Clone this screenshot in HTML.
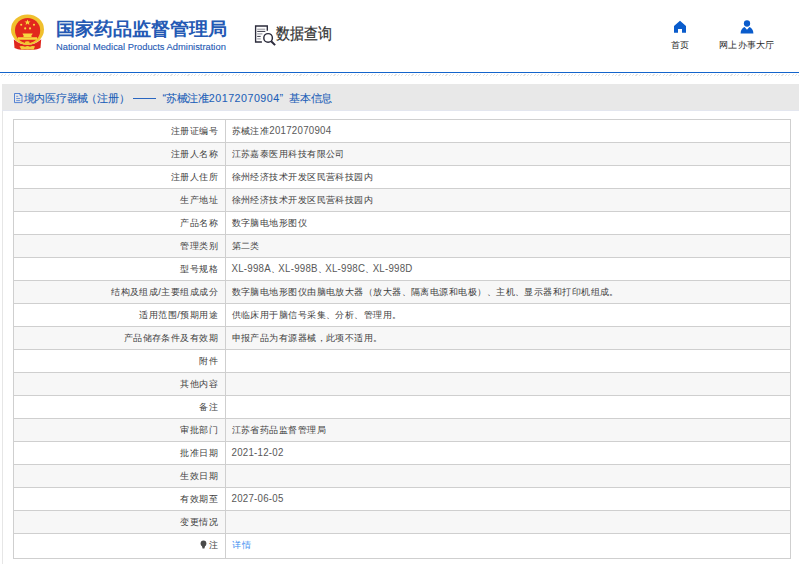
<!DOCTYPE html>
<html><head><meta charset="utf-8">
<style>
*{margin:0;padding:0;box-sizing:border-box}
html,body{width:799px;height:564px;overflow:hidden;background:#fff;font-family:"Liberation Sans",sans-serif;color:#333}
.abs{position:absolute}
#hdr{position:absolute;left:0;top:0;width:799px;height:72px;background:#fff}
#blue{position:absolute;left:0;top:71.7px;width:799px;height:1.4px;background:#1364cc}
#hatch{position:absolute;left:0;top:73.8px;width:799px;height:2.4px;background:repeating-linear-gradient(135deg,#fff 0,#fff 1.6px,#e2e2e2 1.6px,#e2e2e2 2.4px)}
.title{position:absolute;left:56px;top:15.5px;font-size:19px;font-weight:bold;color:#2459b4;white-space:nowrap;line-height:26px;transform:scaleY(0.94);transform-origin:0 100%}
.sub{position:absolute;left:56px;top:40.8px;font-size:9.36px;color:#2459b4;white-space:nowrap;line-height:12px;-webkit-text-stroke:0.1px #2459b4}
.sjcx{position:absolute;left:276px;top:21.6px;font-size:14px;color:#333;white-space:nowrap;line-height:20px;transform:scaleY(1.14);transform-origin:0 0;-webkit-text-stroke:0.2px #333}
.nav{position:absolute;font-size:9.2px;letter-spacing:0.25px;color:#2a2a2a;white-space:nowrap;line-height:12px}
#panel{position:absolute;left:2px;top:84px;width:810px;height:500px;border-left:1px solid #e6e6e6;background:#fff}
#ph{position:absolute;left:2px;top:84px;width:800px;height:26.5px;background:#e8e8e8;border-bottom:1px solid #e3e6ef}
.ph{position:absolute;top:91.5px;font-size:10.7px;letter-spacing:-0.25px;color:#1d5fb8;white-space:nowrap;line-height:13px;-webkit-text-stroke:0.08px #1d5fb8}
table{position:absolute;left:12.5px;top:118.5px;width:778px;border-collapse:collapse;font-size:9.4px;letter-spacing:0.45px;color:#404040}
td{border:1px solid #cfcfcf;height:23px;padding:0;line-height:12px;white-space:nowrap}
td.l{width:212px;text-align:right;padding-right:6.4px;color:#404040}
td.v{padding-left:6px}
tr:nth-child(even) td{background:#f7f7f7}
a{color:#3b8ef0;text-decoration:none}
.n{font-size:9.7px;letter-spacing:0.25px;color:#585858;display:inline-block;transform:scaleY(1.08);transform-origin:0 70%}
.d{letter-spacing:-1.6px}
</style></head><body>
<div id="hdr">
  <svg class="abs" style="left:0;top:0" width="60" height="60" viewBox="0 0 60 60">
    <ellipse cx="27.5" cy="29.5" rx="16.5" ry="15.1" fill="#f0c02e"/>
    <ellipse cx="27.6" cy="30.5" rx="12.6" ry="12.6" fill="#e2281d"/>
    <path d="M13.8 39.2 Q20 44.8 27.5 44.8 Q35 44.8 41.2 39.2 L40.5 48 Q37 49.8 34 49.8 L21 49.8 Q18 49.8 14.5 48Z" fill="#df261c"/>
    <path d="M15.2 38.6 Q21 44.2 27.5 44.2 Q34 44.2 39.8 38.6" fill="none" stroke="#f3c631" stroke-width="1.4"/>
    <polygon points="27.5,19.4 28.3,21.5 30.5,21.5 28.8,22.8 29.4,24.9 27.5,23.6 25.6,24.9 26.2,22.8 24.5,21.5 26.7,21.5" fill="#f9dc3e"/>
    <circle cx="21.2" cy="24.8" r="1.05" fill="#f9dc3e"/><circle cx="34" cy="24.8" r="1.05" fill="#f9dc3e"/>
    <circle cx="25.2" cy="28.4" r="1.05" fill="#f9dc3e"/><circle cx="30" cy="28.4" r="1.05" fill="#f9dc3e"/>
    <path d="M22.5 33.5 H32.7 L32 35 H23.2Z M23.5 35 H31.5 V37 H23.5Z M18 37.2 H37 V39.7 H18Z" fill="#f7d840"/>
    <ellipse cx="27.3" cy="42.4" rx="2.4" ry="1.2" fill="#f3c631"/>
    <path d="M19.5 46.3 Q23 45.3 25 46.8 Q27.5 45.3 30 46.8 Q32 45.3 35 46.3 L33.6 49.8 Q30.5 48.6 27.5 49.6 Q24.5 48.6 21.4 49.8Z" fill="#f3cc3c"/>
  </svg>
  <div class="title">国家药品监督管理局</div>
  <div class="sub">National Medical Products Administration</div>
  <svg class="abs" style="left:250px;top:20px" width="30" height="28" viewBox="0 0 30 28">
    <path d="M11.9 21.95 H5.6 V5.95 H17.3 V10.7" fill="none" stroke="#2b2b3b" stroke-width="1.35"/>
    <path d="M7.2 9.2h8M7.2 13.9h5.2M7.2 18.9h3.5" stroke="#8a8a94" stroke-width="0.95"/>
    <path d="M7.2 11.4h8.1M7.2 16.4h3.5" stroke="#2b2b3b" stroke-width="0.95"/>
    <circle cx="18.1" cy="17.9" r="4.3" fill="none" stroke="#2b2b3b" stroke-width="1.45"/>
    <path d="M21.2 21.2 L25.1 25.1" stroke="#2b2b3b" stroke-width="2"/>
  </svg>
  <div class="sjcx">数据查询</div>
  <svg class="abs" style="left:673px;top:20px" width="14" height="13" viewBox="0 0 14 13">
    <path d="M1 6 L7 0.8 L13 6 V12.7 H9 V9 H5 V12.7 H1Z" fill="#0a5ccc"/>
  </svg>
  <div class="nav" style="left:670.5px;top:38.5px">首页</div>
  <svg class="abs" style="left:740px;top:20px" width="14" height="14" viewBox="0 0 14 14">
    <circle cx="7" cy="3.5" r="3.15" fill="#0a5ccc"/>
    <path d="M0.6 13.4 C0.6 10 2.5 7.6 4.6 7.0 L7 9.8 L9.4 7.0 C11.5 7.6 13.4 10 13.4 13.4Z" fill="#0a5ccc"/>
  </svg>
  <div class="nav" style="left:719px;top:38.5px">网上办事大厅</div>
</div>
<div id="blue"></div>
<div id="hatch"></div>
<div id="panel"></div>
<div id="ph"></div>
<svg class="abs" style="left:13.5px;top:92.5px" width="9" height="11" viewBox="0 0 9 11">
  <path d="M0.5 0.5 H6 L8 2.5 V9.6 H0.5Z" fill="none" stroke="#3a70d0" stroke-width="0.85"/>
  <path d="M6 0.5 V2.5 H8" fill="none" stroke="#3a70d0" stroke-width="0.85"/>
  <path d="M2.2 3.3h2M2.2 5.5h4M2.2 7.6h4" stroke="#4a7cd4" stroke-width="0.8"/>
</svg>
<div class="ph" style="left:23.6px">境内医疗器械</div>
<div class="ph" style="left:86.3px">（注<span style="letter-spacing:0.3px">册</span>）</div>
<div class="abs" style="left:133.2px;top:97.6px;width:23px;height:1.1px;background:#2a66c0"></div>
<div class="ph" style="left:162.5px">“</div>
<div class="ph" style="left:165.8px">苏械注准<span style="letter-spacing:0.5px">20172070904</span></div>
<div class="ph" style="left:279.5px">”</div>
<div class="ph" style="left:289px">基本信息</div>
<table>
    <tr><td class="l">注册证编号</td><td class="v">苏械注准<span class="n">20172070904</span></td></tr>
    <tr><td class="l">注册人名称</td><td class="v">江苏嘉泰医用科技有限公司</td></tr>
    <tr><td class="l">注册人住所</td><td class="v">徐州经济技术开发区民营科技园内</td></tr>
    <tr><td class="l">生产地址</td><td class="v">徐州经济技术开发区民营科技园内</td></tr>
    <tr><td class="l">产品名称</td><td class="v">数字脑电地形图仪</td></tr>
    <tr><td class="l">管理类别</td><td class="v">第二类</td></tr>
    <tr><td class="l">型号规格</td><td class="v"><span class="n">XL-998A</span><span class="d">、</span><span class="n">XL-998B</span><span class="d">、</span><span class="n">XL-998C</span><span class="d">、</span><span class="n">XL-998D</span></td></tr>
    <tr><td class="l">结构及组成/主要组成成分</td><td class="v">数字脑电地形图仪由脑电放大器（放大器、隔离电源和电极）、主机、显示器和打印机组成。</td></tr>
    <tr><td class="l">适用范围/预期用途</td><td class="v">供临床用于脑信号采集、分析、管理用。</td></tr>
    <tr><td class="l">产品储存条件及有效期</td><td class="v">申报产品为有源器械，此项不适用。</td></tr>
    <tr><td class="l">附件</td><td class="v"></td></tr>
    <tr><td class="l">其他内容</td><td class="v"></td></tr>
    <tr><td class="l">备注</td><td class="v"></td></tr>
    <tr><td class="l">审批部门</td><td class="v">江苏省药品监督管理局</td></tr>
    <tr><td class="l">批准日期</td><td class="v"><span class="n">2021-12-02</span></td></tr>
    <tr><td class="l">生效日期</td><td class="v"></td></tr>
    <tr><td class="l">有效期至</td><td class="v"><span class="n">2027-06-05</span></td></tr>
    <tr><td class="l">变更情况</td><td class="v"></td></tr>
    <tr><td class="l" style="height:25px;padding-bottom:0.3px">注</td><td class="v" style="padding-bottom:0.3px"><a style="letter-spacing:1.3px">详情</a></td></tr>
  </table>
<svg class="abs" style="left:196px;top:535.5px" width="14" height="16" viewBox="0 0 14 16">
  <circle cx="7.5" cy="7.5" r="2.9" fill="#4a4a4a"/>
  <path d="M5.8 9.5 L9.2 9.5 L8.4 12.6 H6.6Z" fill="#4a4a4a"/>
</svg>
</body></html>
